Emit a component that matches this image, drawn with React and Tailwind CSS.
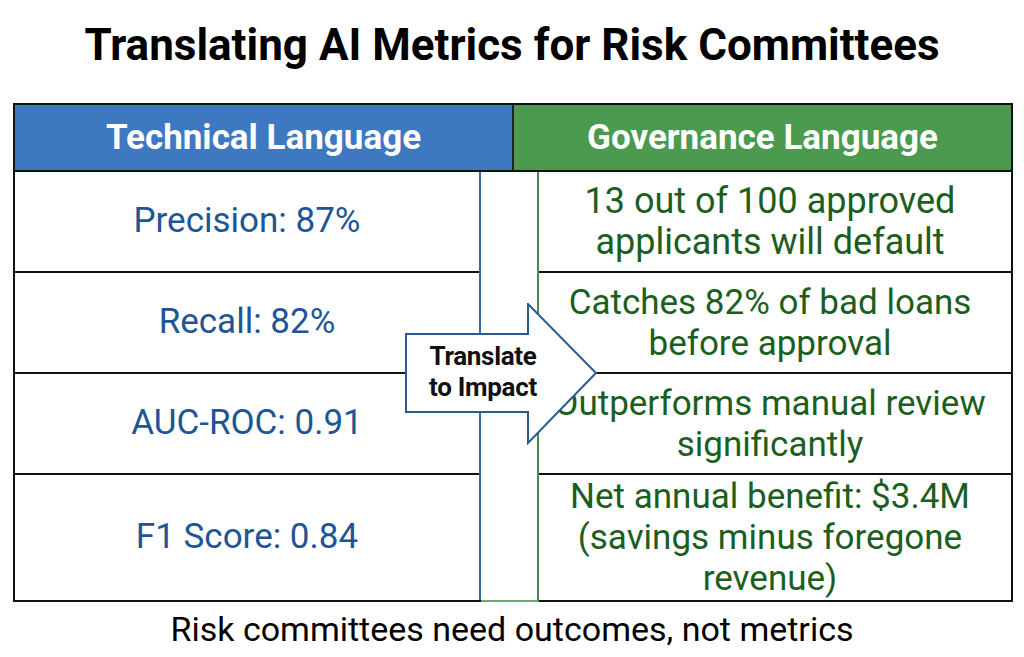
import React from 'react';

const rows = [
  { tech: 'Precision: 87%', gov: ['13 out of 100 approved', 'applicants will default'], h: 'h-[101px]', size: 'text-[36px]' },
  { tech: 'Recall: 82%', gov: ['Catches 82% of bad loans', 'before approval'], h: 'h-[101px]', size: 'text-[35px]' },
  { tech: 'AUC-ROC: 0.91', gov: ['Outperforms manual review', 'significantly'], h: 'h-[101px]', size: 'text-[35px]' },
  { tech: 'F1 Score: 0.84', gov: ['Net annual benefit: $3.4M', '(savings minus foregone', 'revenue)'], h: 'flex-1', size: 'text-[35px]' },
];

const Arrow = () => (
  <div className="absolute left-[390px] top-[198px] w-[194px] h-[142px]">
    <svg width="194" height="142" viewBox="0 0 194 142" className="absolute left-0 top-0">
      <polygon
        points="1,31 123,31 123,1 191,70 123,140 123,109 1,109"
        fill="#ffffff"
        stroke="#2b5b8c"
        strokeWidth="2"
        strokeLinejoin="miter"
      />
    </svg>
    <div className="absolute left-0 top-[38px] w-[156px] text-center text-[26px] leading-[31px] font-bold text-[#111] tracking-[-0.3px]">
      Translate<br />to Impact
    </div>
  </div>
);

const App = () => {
  return (
    <div className="w-[1024px] h-[657px] bg-white overflow-hidden" style={{ fontFamily: 'Roboto, "Noto Sans", sans-serif' }}>
      <h1 className="pt-[18px] text-[44px] leading-[54px] font-bold text-center text-black">
        Translating AI Metrics for Risk Committees
      </h1>

      <div className="relative ml-[13px] mt-[31px] w-[1000px] h-[499px] border-2 border-[#111] flex flex-col">
        {/* header */}
        <div className="flex h-[67px] border-b-2 border-[#111]">
          <div className="w-[497px] bg-[#3e78c0] flex items-center justify-center pt-[2px] text-white font-bold text-[35px]">
            Technical Language
          </div>
          <div className="flex-1 bg-[#4b9a4f] border-l-2 border-[#222] flex items-center justify-center pt-[2px] text-white font-bold text-[35px]">
            Governance Language
          </div>
        </div>

        {/* body */}
        <div className="flex flex-1">
          <div className="w-[466px] flex flex-col border-r-2 border-[#3a6aa5]">
            {rows.map((r, i) => (
              <div
                key={i}
                className={`${r.h} flex items-center justify-center text-[35px] text-[#1d5596] ${i < rows.length - 1 ? 'border-b-2 border-[#111]' : ''}`}
              >
                {r.tech}
              </div>
            ))}
          </div>
          <div className="w-[58px] border-r-2 border-[#4a8a4e] border-b-2 border-b-[#6aa86d] -mb-[2px]"></div>
          <div className="flex-1 flex flex-col">
            {rows.map((r, i) => (
              <div
                key={i}
                className={`${r.h} ${r.size} pr-[10px] flex flex-col items-center justify-center leading-[41px] text-[#1b5e20] text-center whitespace-nowrap ${i < rows.length - 1 ? 'border-b-2 border-[#111]' : ''}`}
              >
                {r.gov.map((l, j) => (
                  <span key={j}>{l}</span>
                ))}
              </div>
            ))}
          </div>
        </div>

        <Arrow />
      </div>

      <p className="mt-[8px] text-center text-[34px] leading-[38px] text-black">
        Risk committees need outcomes, not metrics
      </p>
    </div>
  );
};

export default App;
